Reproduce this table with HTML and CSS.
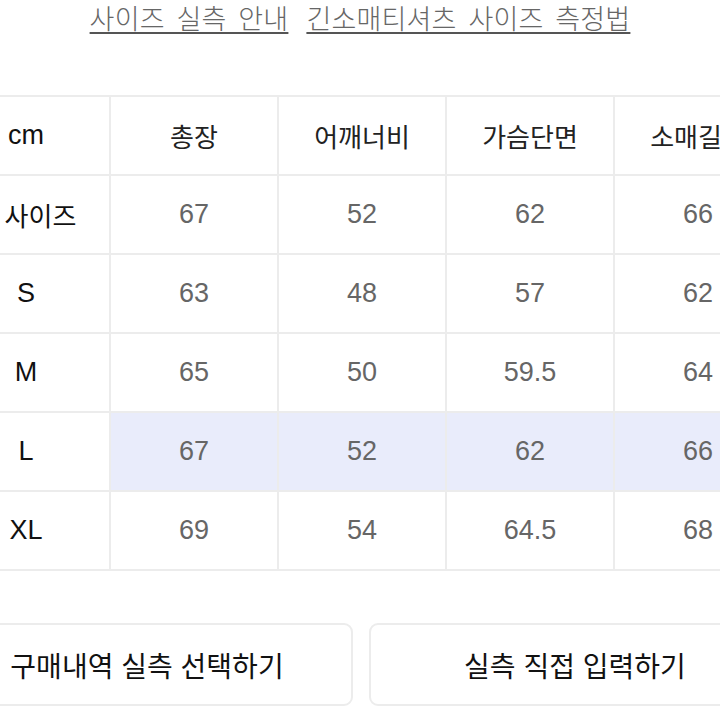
FILE: index.html
```html
<!DOCTYPE html>
<html lang="ko">
<head>
<meta charset="utf-8">
<link rel="stylesheet" href="styles.css">
</head>
<body>
<div class="links">
  <a class="link" href="#">사이즈 실측 안내</a>
  <a class="link" href="#">긴소매티셔츠 사이즈 측정법</a>
</div>
<div class="page">
  <table class="size-table">
    <tr class="head">
      <td class="label">cm</td>
      <td>총장</td>
      <td>어깨너비</td>
      <td>가슴단면</td>
      <td>소매길이</td>
    </tr>
    <tr>
      <td class="label label-wide">사이즈</td>
      <td>67</td><td>52</td><td>62</td><td>66</td>
    </tr>
    <tr>
      <td class="label">S</td>
      <td>63</td><td>48</td><td>57</td><td>62</td>
    </tr>
    <tr>
      <td class="label">M</td>
      <td>65</td><td>50</td><td>59.5</td><td>64</td>
    </tr>
    <tr class="active">
      <td class="label">L</td>
      <td>67</td><td>52</td><td>62</td><td>66</td>
    </tr>
    <tr>
      <td class="label">XL</td>
      <td>69</td><td>54</td><td>64.5</td><td>68</td>
    </tr>
  </table>
  <div class="actions">
    <button class="btn">구매내역 실측 선택하기</button>
    <button class="btn">실측 직접 입력하기</button>
  </div>
</div>
</body>
</html>
```

FILE: styles.css
```css
html, body {
  margin: 0;
  padding: 0;
  background: #ffffff;
  overflow: hidden;
  width: 720px;
  height: 720px;
}

body {
  font-family: "Liberation Sans", "Noto Sans CJK KR", sans-serif;
  color: #111;
}

.links {
  display: flex;
  justify-content: center;
  gap: 18px;
  height: 95px;
  align-items: flex-start;
}

.link {
  font-family: "Noto Sans CJK KR", sans-serif;
  font-size: 27px;
  font-weight: 300;
  line-height: 36px;
  color: #666;
  text-decoration: underline;
  text-decoration-thickness: 2px;
  text-underline-offset: 3px;
  text-decoration-color: #555;
  letter-spacing: 0.2px;
  word-spacing: 4px;
}

.page {
  margin-left: -59px;
  width: 840px;
}

.size-table {
  border-collapse: collapse;
  table-layout: fixed;
  width: 840px;
}

.size-table td {
  width: 166px;
  height: 77px;
  padding: 0;
  border: 2px solid #ececec;
  text-align: center;
  vertical-align: middle;
  font-size: 27px;
  color: #666;
}

.size-table .head td {
  color: #222;
  font-weight: 400;
  font-family: "Noto Sans CJK KR", sans-serif;
  font-size: 26px;
}

.size-table td.label {
  color: #111;
  font-family: "Liberation Sans", "Noto Sans CJK KR", sans-serif;
  font-size: 27px;
  font-weight: 400;
}

.size-table .head td.label {
  font-family: "Liberation Sans", sans-serif;
  font-weight: 400;
  font-size: 27px;
}

.size-table td.label-wide {
  font-family: "Noto Sans CJK KR", sans-serif;
  font-size: 26px;
  text-indent: 29px;
}

.size-table .active td {
  background: #e9ecfb;
}

.size-table .active td.label {
  background: #ffffff;
}

.actions {
  display: flex;
  gap: 16px;
  margin-top: 52px;
}

.btn {
  flex: 1;
  height: 83px;
  background: #fff;
  border: 2px solid #ececec;
  border-radius: 9px;
  font-family: "Noto Sans CJK KR", sans-serif;
  font-size: 28px;
  font-weight: 400;
  color: #111;
  padding: 0;
}
```
